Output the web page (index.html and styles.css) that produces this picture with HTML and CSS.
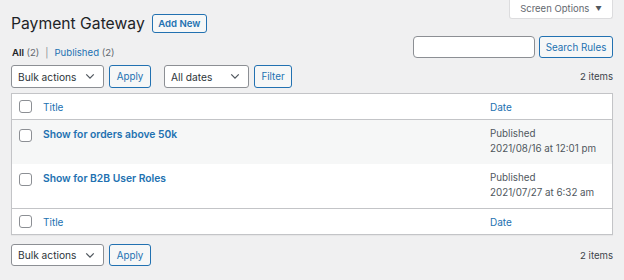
FILE: index.html
```html
<!DOCTYPE html>
<html>
<head>
<meta charset="utf-8">
<link rel="stylesheet" href="styles.css">
</head>
<body>
<div class="wrap">
  <div class="top">
    <div class="heading">
      <h1 class="title">Payment Gateway</h1>
      <a class="btn-outline add-new">Add New</a>
    </div>
    <div class="screen-options">Screen Options <span class="arrow">▼</span></div>
  </div>
  <div class="row-search">
    <ul class="subsubsub">
      <li class="current">All <span class="count">(2)</span></li>
      <li class="sep">|</li>
      <li><a>Published</a> <span class="count">(2)</span></li>
    </ul>
    <div class="search-box">
      <div class="search-input"></div>
      <a class="btn-outline search-btn">Search Rules</a>
    </div>
  </div>
  <div class="tablenav top-nav">
    <div class="actions">
      <div class="select bulk">Bulk actions <svg class="chev" viewBox="0 0 12 8" width="10" height="7"><path d="M1.5 1.5 L6 6 L10.5 1.5" fill="none" stroke="#50575e" stroke-width="1.5"/></svg></div>
      <a class="btn-outline apply">Apply</a>
      <div class="select dates">All dates <svg class="chev" viewBox="0 0 12 8" width="10" height="7"><path d="M1.5 1.5 L6 6 L10.5 1.5" fill="none" stroke="#50575e" stroke-width="1.5"/></svg></div>
      <a class="btn-outline filter">Filter</a>
    </div>
    <div class="items">2 items</div>
  </div>
  <div class="table">
    <div class="trow thead">
      <div class="cb"><span class="box"></span></div>
      <div class="c-title"><a>Title</a></div>
      <div class="c-date"><a>Date</a></div>
    </div>
    <div class="trow item alt">
      <div class="cb"><span class="box"></span></div>
      <div class="c-title"><a class="strong">Show for orders above 50k</a></div>
      <div class="c-date">Published<br>2021/08/16 at 12:01 pm</div>
    </div>
    <div class="trow item">
      <div class="cb"><span class="box"></span></div>
      <div class="c-title"><a class="strong">Show for B2B User Roles</a></div>
      <div class="c-date">Published<br>2021/07/27 at 6:32 am</div>
    </div>
    <div class="trow tfoot">
      <div class="cb"><span class="box"></span></div>
      <div class="c-title"><a>Title</a></div>
      <div class="c-date"><a>Date</a></div>
    </div>
  </div>
  <div class="tablenav bottom-nav">
    <div class="actions">
      <div class="select bulk">Bulk actions <svg class="chev" viewBox="0 0 12 8" width="10" height="7"><path d="M1.5 1.5 L6 6 L10.5 1.5" fill="none" stroke="#50575e" stroke-width="1.5"/></svg></div>
      <a class="btn-outline apply">Apply</a>
    </div>
    <div class="items">2 items</div>
  </div>
</div>
</body>
</html>
```
FILE: styles.css
```css
* { box-sizing: border-box; }
html, body { margin: 0; padding: 0; }
body {
  background: #f0f0f1;
  font-family: Inter, "Noto Sans", "Liberation Sans", sans-serif;
  font-size: 10px;
  color: #3c434a;
  width: 624px;
  height: 280px;
  overflow: hidden;
}
a { color: #2271b1; text-decoration: none; }
.wrap { padding: 0 11px 0 11px; }

.top { display: flex; justify-content: space-between; align-items: flex-start; height: 33px; }
.heading { display: flex; align-items: center; padding-top: 14px; }
.title {
  margin: 0;
  font-size: 15.7px;
  font-weight: 400;
  color: #1d2327;
  line-height: 19px;
}
.btn-outline {
  display: inline-flex;
  align-items: center;
  justify-content: center;
  border: 1px solid #2271b1;
  border-radius: 3px;
  background: #f6f7f7;
  color: #2271b1;
  font-size: 9.8px;
  white-space: nowrap;
}
.add-new { margin-left: 7px; width: 55px; height: 19px; font-weight: 600; font-size: 9.6px; }
.screen-options {
  width: 104px;
  height: 19px;
  background: #fff;
  border: 1px solid #dcdcde;
  border-top: none;
  border-radius: 0 0 3px 3px;
  display: flex;
  align-items: center;
  justify-content: center;
  color: #646970;
  font-size: 9.5px;
  padding-bottom: 1px;
}
.screen-options .arrow { font-size: 6.5px; margin-left: 6px; color: #50575e; }

.row-search { display: flex; justify-content: space-between; align-items: flex-start; height: 29px; margin-top: 3px; }
.subsubsub { list-style: none; margin: 0; padding: 11px 0 0 1px; display: flex; gap: 5px; font-size: 9.6px; color: #646970; }
.subsubsub .current { color: #1d2327; font-weight: 600; }
.subsubsub .current .count { font-weight: 400; color: #646970; }
.subsubsub .sep { color: #8c8f94; padding: 0 1px; }
.search-box { display: flex; gap: 4px; }
.search-input { width: 122px; height: 22px; background: #fff; border: 1px solid #8c8f94; border-radius: 4px; }
.search-btn { width: 74px; height: 22px; }

.tablenav { display: flex; justify-content: space-between; align-items: center; }
.top-nav { height: 23px; margin-bottom: 5px; }
.actions { display: flex; align-items: center; }
.select {
  height: 23px;
  background: #fff;
  border: 1px solid #8c8f94;
  border-radius: 3px;
  display: flex;
  align-items: center;
  justify-content: space-between;
  padding: 0 8px 0 6px;
  color: #2c3338;
  font-size: 10.2px;
}
.bulk { width: 93px; }
.apply { width: 42px; height: 23px; margin-left: 5px; }
.dates { width: 85px; margin-left: 13px; }
.filter { width: 38px; height: 23px; margin-left: 5px; }
.chev { display: block; }
.items { font-size: 9.6px; color: #3c434a; }

.table { background: #fff; border: 1px solid #c3c4c7; box-shadow: 0 1px 1px rgba(0,0,0,0.04); }
.trow { display: flex; }
.cb { width: 31px; flex: none; padding-left: 7px; }
.box { display: block; width: 13px; height: 13px; border: 1px solid #8c8f94; border-radius: 3px; background: #fff; }
.c-title { flex: 1; }
.c-date { width: 122px; flex: none; }
.thead, .tfoot { align-items: center; font-size: 10px; }
.thead { border-bottom: 1px solid #c3c4c7; height: 26px; }
.tfoot { border-top: 1px solid #c3c4c7; height: 26px; }
.item { height: 44px; padding-top: 7px; align-items: flex-start; }
.item .cb { padding-top: 2px; }
.item .c-title { padding-top: 1px; }
.item.alt { background: #f6f7f7; }
.strong { font-weight: 600; font-size: 10.3px; }
.item .c-date { line-height: 15px; margin-top: -1px; font-size: 9.8px; color: #50575e; }

.bottom-nav { margin-top: 9px; height: 22px; }
.bottom-nav .apply { height: 22px; }
.bottom-nav .select { height: 22px; }
```
